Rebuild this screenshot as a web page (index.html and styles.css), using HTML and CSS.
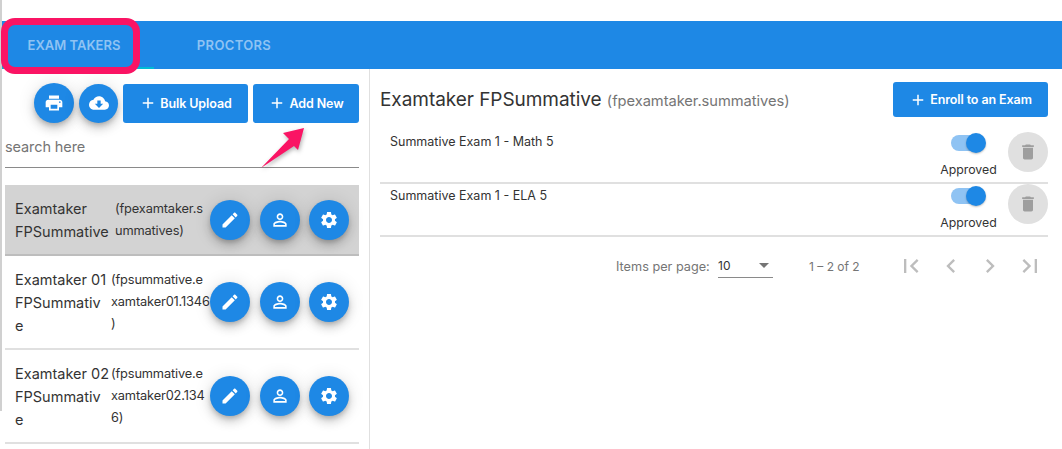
FILE: index.html
```html
<!DOCTYPE html>
<html lang="en">
<head>
<meta charset="utf-8">
<title>Exam Takers</title>
<link rel="stylesheet" href="styles.css">
</head>
<body>
<svg class="sprite" aria-hidden="true">
  <symbol id="i-print" viewBox="0 0 24 24"><path d="M19 8H5c-1.66 0-3 1.34-3 3v6h4v4h12v-4h4v-6c0-1.66-1.34-3-3-3zm-3 11H8v-5h8v5zm3-7c-.55 0-1-.45-1-1s.45-1 1-1 1 .45 1 1-.45 1-1 1zm-1-9H6v4h12V3z"/></symbol>
  <symbol id="i-cloud" viewBox="0 0 24 24"><path d="M19.35 10.04C18.67 6.59 15.64 4 12 4 9.11 4 6.6 5.64 5.35 8.04 2.34 8.36 0 10.91 0 14c0 3.31 2.69 6 6 6h13c2.76 0 5-2.24 5-5 0-2.64-2.05-4.78-4.65-4.96zM17 13l-5 5-5-5h3V9h4v4h3z"/></symbol>
  <symbol id="i-add" viewBox="0 0 24 24"><path d="M19 13h-6v6h-2v-6H5v-2h6V5h2v6h6v2z"/></symbol>
  <symbol id="i-edit" viewBox="0 0 24 24"><path d="M3 17.25V21h3.75L17.81 9.94l-3.75-3.75L3 17.25zM20.71 7.04c.39-.39.39-1.02 0-1.41l-2.34-2.34c-.39-.39-1.02-.39-1.41 0l-1.83 1.83 3.75 3.75 1.83-1.83z"/></symbol>
  <symbol id="i-person" viewBox="0 0 24 24"><path d="M12 5.9c1.16 0 2.1.94 2.1 2.1s-.94 2.1-2.1 2.1S9.9 9.16 9.9 8s.94-2.1 2.1-2.1m0 9c2.97 0 6.1 1.46 6.1 2.1v1.1H5.9V17c0-.64 3.13-2.1 6.1-2.1M12 4C9.79 4 8 5.79 8 8s1.79 4 4 4 4-1.79 4-4-1.79-4-4-4zm0 9c-2.67 0-8 1.34-8 4v3h16v-3c0-2.66-5.33-4-8-4z"/></symbol>
  <symbol id="i-gear" viewBox="0 0 24 24"><path d="M19.14 12.94c.04-.3.06-.61.06-.94 0-.32-.02-.64-.07-.94l2.03-1.58c.18-.14.23-.41.12-.61l-1.92-3.32c-.12-.22-.37-.29-.59-.22l-2.39.96c-.5-.38-1.03-.7-1.62-.94l-.36-2.54c-.04-.24-.24-.41-.48-.41h-3.84c-.24 0-.43.17-.47.41l-.36 2.54c-.59.24-1.13.57-1.62.94l-2.39-.96c-.22-.08-.47 0-.59.22L2.74 8.87c-.12.21-.08.47.12.61l2.03 1.58c-.05.3-.09.63-.09.94s.02.64.07.94l-2.03 1.58c-.18.14-.23.41-.12.61l1.92 3.32c.12.22.37.29.59.22l2.39-.96c.5.38 1.03.7 1.62.94l.36 2.54c.05.24.24.41.48.41h3.84c.24 0 .44-.17.47-.41l.36-2.54c.59-.24 1.13-.56 1.62-.94l2.39.96c.22.08.47 0 .59-.22l1.92-3.32c.12-.22.07-.47-.12-.61l-2.01-1.58zM12 15.6c-1.98 0-3.6-1.62-3.6-3.6s1.62-3.6 3.6-3.6 3.6 1.62 3.6 3.6-1.62 3.6-3.6 3.6z"/></symbol>
  <symbol id="i-delete" viewBox="0 0 24 24"><path d="M6 19c0 1.1.9 2 2 2h8c1.1 0 2-.9 2-2V7H6v12zM19 4h-3.5l-1-1h-5l-1 1H5v2h14V4z"/></symbol>
  <symbol id="i-first" viewBox="0 0 24 24"><path d="M18.41 16.59L13.82 12l4.59-4.59L17 6l-6 6 6 6zM6 6h2v12H6z"/></symbol>
  <symbol id="i-prev" viewBox="0 0 24 24"><path d="M15.41 7.41L14 6l-6 6 6 6 1.41-1.41L10.83 12z"/></symbol>
  <symbol id="i-next" viewBox="0 0 24 24"><path d="M10 6L8.59 7.41 13.17 12l-4.58 4.59L10 18l6-6z"/></symbol>
  <symbol id="i-last" viewBox="0 0 24 24"><path d="M5.59 7.41L10.18 12l-4.59 4.59L7 18l6-6-6-6zM16 6h2v12h-2z"/></symbol>
</svg>

<div class="page">
  <nav class="tabs">
    <div class="tab tab-active"><span>EXAM TAKERS</span></div>
    <div class="tab tab-second"><span>PROCTORS</span></div>
  </nav>

  <div class="main">
    <aside class="left">
      <div class="toolbar">
        <button class="fab"><svg class="ic20"><use href="#i-print"/></svg></button>
        <button class="fab fab-cloud"><svg class="ic20"><use href="#i-cloud"/></svg></button>
        <button class="btn btn-bulk"><svg class="ic18"><use href="#i-add"/></svg>Bulk Upload</button>
        <button class="btn btn-add"><svg class="ic18"><use href="#i-add"/></svg>Add New</button>
      </div>
      <div class="search">search here</div>

      <div class="list">
        <div class="row row-selected">
          <div class="who who-a">Examtaker<br>FPSummative</div>
          <div class="mail">(fpexamtaker.s<br>ummatives)</div>
          <div class="actions">
            <button class="fab"><svg class="ic20"><use href="#i-edit"/></svg></button>
            <button class="fab"><svg class="ic20"><use href="#i-person"/></svg></button>
            <button class="fab"><svg class="ic20"><use href="#i-gear"/></svg></button>
          </div>
        </div>
        <div class="row">
          <div class="who">Examtaker 01<br>FPSummativ<br>e</div>
          <div class="mail">(fpsummative.e<br>xamtaker01.1346<br>)</div>
          <div class="actions">
            <button class="fab"><svg class="ic20"><use href="#i-edit"/></svg></button>
            <button class="fab"><svg class="ic20"><use href="#i-person"/></svg></button>
            <button class="fab"><svg class="ic20"><use href="#i-gear"/></svg></button>
          </div>
        </div>
        <div class="row">
          <div class="who">Examtaker 02<br>FPSummativ<br>e</div>
          <div class="mail">(fpsummative.e<br>xamtaker02.134<br>6)</div>
          <div class="actions">
            <button class="fab"><svg class="ic20"><use href="#i-edit"/></svg></button>
            <button class="fab"><svg class="ic20"><use href="#i-person"/></svg></button>
            <button class="fab"><svg class="ic20"><use href="#i-gear"/></svg></button>
          </div>
        </div>
      </div>
    </aside>

    <section class="right">
      <header class="head">
        <h1 class="title">Examtaker FPSummative <span class="title-sub">(fpexamtaker.summatives)</span></h1>
        <button class="btn btn-enroll"><svg class="ic18"><use href="#i-add"/></svg>Enroll to an Exam</button>
      </header>

      <div class="exam exam-first">
        <div class="exam-name">Summative Exam 1 - Math 5</div>
        <div class="status">
          <span class="toggle"><span class="thumb"></span></span>
          <span class="status-label">Approved</span>
        </div>
        <button class="del"><svg class="ic20"><use href="#i-delete"/></svg></button>
      </div>
      <div class="exam">
        <div class="exam-name">Summative Exam 1 - ELA 5</div>
        <div class="status">
          <span class="toggle"><span class="thumb"></span></span>
          <span class="status-label">Approved</span>
        </div>
        <button class="del"><svg class="ic20"><use href="#i-delete"/></svg></button>
      </div>

      <div class="pager">
        <span class="pager-label">Items per page:</span>
        <div class="pager-select"><span>10</span><i class="caret"></i></div>
        <span class="pager-range">1 – 2 of 2</span>
        <div class="pager-nav">
          <svg class="ic28"><use href="#i-first"/></svg>
          <svg class="ic28"><use href="#i-prev"/></svg>
          <svg class="ic28"><use href="#i-next"/></svg>
          <svg class="ic28"><use href="#i-last"/></svg>
        </div>
      </div>
    </section>
  </div>

  <div class="strip"></div>
  <div class="highlight"></div>
  <svg class="arrow" viewBox="0 0 60 50" width="60" height="50"><polygon points="54,3 33,8 39,14 11,43 44,21 48,25"/></svg>
</div>
</body>
</html>
```
FILE: styles.css
```css
* { box-sizing: border-box; }
html, body { margin: 0; padding: 0; background: #fff; }
body { font-family: Inter, "Noto Sans", sans-serif; color: #333; overflow: hidden; }
.sprite { display: none; }
button { border: 0; padding: 0; font-family: inherit; cursor: pointer; }
svg { fill: currentColor; display: block; flex: none; }
.ic18 { width: 18px; height: 18px; }
.ic20 { width: 20px; height: 20px; }
.ic28 { width: 28px; height: 28px; }

.page { position: relative; width: 1062px; height: 449px; padding-top: 21px; overflow: hidden; }

.tabs { display: flex; height: 48px; background: #1e88e5; }
.tab {
  display: flex; align-items: center; justify-content: center; padding-bottom: 1px;
  color: #8fc3f3; font-size: 13px; font-weight: 600;
}
.tab-active { width: 154px; padding-right: 6px; box-shadow: inset 0 -2px 0 #00bcd4; }
.tab-second { width: 160px; letter-spacing: .35px; }

.main { display: flex; height: 380px; }
.left { width: 370px; flex: none; border-right: 1px solid #e0e0e0; padding: 14px 10px 0 5px; }

.toolbar { display: flex; justify-content: flex-end; align-items: center; gap: 5px; }
.fab {
  width: 40px; height: 40px; border-radius: 50%; flex: none;
  display: flex; align-items: center; justify-content: center;
  background: #1e88e5; color: #fff;
  box-shadow: 0 3px 5px -1px rgba(0,0,0,.2), 0 6px 10px 0 rgba(0,0,0,.14), 0 1px 18px 0 rgba(0,0,0,.12);
}
.fab-cloud { width: 39px; height: 39px; }
.btn {
  display: flex; align-items: center; justify-content: center; gap: 3px;
  height: 39px; border-radius: 3px; background: #1e88e5; color: #fff;
  font-size: 12.5px; font-weight: 600; letter-spacing: -.1px; white-space: nowrap;
}
.btn-bulk { width: 125px; }
.btn-add { width: 106px; }

.search {
  height: 45px; padding-top: 14px; border-bottom: 1px solid #8a8a8a;
  font-size: 14.5px; line-height: 20px; color: #757575; letter-spacing: -.1px;
}

.list { margin-top: 17px; }
.row { display: flex; align-items: center; height: 94px; padding: 0 10px; border-bottom: 2px solid #e0e0e0; position: relative; }
.row-selected { height: 71px; background: #d3d3d3; border-bottom-color: #bdbdbd; }
.who { width: 96px; flex: none; font-size: 14.5px; line-height: 23px; white-space: nowrap; }
.who-a { width: 100px; }
.mail { font-size: 12.8px; line-height: 22px; white-space: nowrap; letter-spacing: -.15px; }
.actions { margin-left: auto; display: flex; gap: 9.5px; }

.right { flex: 1; padding: 13px 14px 0 10px; }
.head { display: flex; align-items: center; justify-content: space-between; height: 35px; margin-bottom: 13px; }
.title { margin: 0 0 1px; font-size: 19px; font-weight: 400; letter-spacing: -.05px; color: #333; white-space: nowrap; }
.title-sub { font-size: 14.7px; color: #757575; }
.btn-enroll { width: 155px; height: 35px; }

.exam { display: flex; height: 53px; border-bottom: 2px solid #e0e0e0; position: relative; }
.exam-first { height: 54px; }
.exam-name { flex: 1; padding: 4px 0 0 10px; font-size: 12.5px; line-height: 16px; color: #333; }
.status { width: 57px; display: flex; flex-direction: column; align-items: center; margin-right: 11px; padding-top: 2px; }
.exam-first .status { padding-top: 3px; }
.toggle { width: 34px; height: 16px; margin: 2px 0 0 -2px; border-radius: 8px; background: #8fc3f3; position: relative; display: block; }
.thumb { position: absolute; right: -1px; top: -2px; width: 20px; height: 20px; border-radius: 50%; background: #1e88e5; box-shadow: 0 1px 2px rgba(0,0,0,.25); }
.status-label { margin-top: 12px; font-size: 12.3px; line-height: 14px; color: #333; }
.del { width: 40px; height: 40px; border-radius: 50%; background: #e0e0e0; color: #9e9e9e; display: flex; align-items: center; justify-content: center; flex: none; }
.exam-first .del { margin-top: 2px; }

.pager { display: flex; align-items: center; height: 58px; margin-right: -3px; font-size: 12px; color: #757575; padding-left: 236px; }
.pager-label { width: 102px; font-size: 12.7px; white-space: nowrap; }
.pager-select { width: 55px; height: 24px; display: flex; align-items: center; justify-content: space-between; border-bottom: 1px solid #8a8a8a; color: #333; padding-right: 4px; }
.caret { width: 0; height: 0; border-left: 5px solid transparent; border-right: 5px solid transparent; border-top: 5px solid #757575; }
.pager-range { width: 82px; margin-left: 36px; white-space: nowrap; }
.pager-nav { display: flex; gap: 11.7px; margin-left: auto; color: #bdbdbd; padding-right: 7px; }

.strip { position: absolute; left: 0; top: 0; width: 2px; height: 411px; background: #d0d0d0; }
.highlight { position: absolute; left: 1px; top: 18px; width: 139px; height: 56px; border: 7px solid #fa1464; border-radius: 14px; }
.arrow { position: absolute; left: 250px; top: 125px; fill: #fa1464; filter: drop-shadow(1px 2px 2px rgba(0,0,0,.3)); }
```
